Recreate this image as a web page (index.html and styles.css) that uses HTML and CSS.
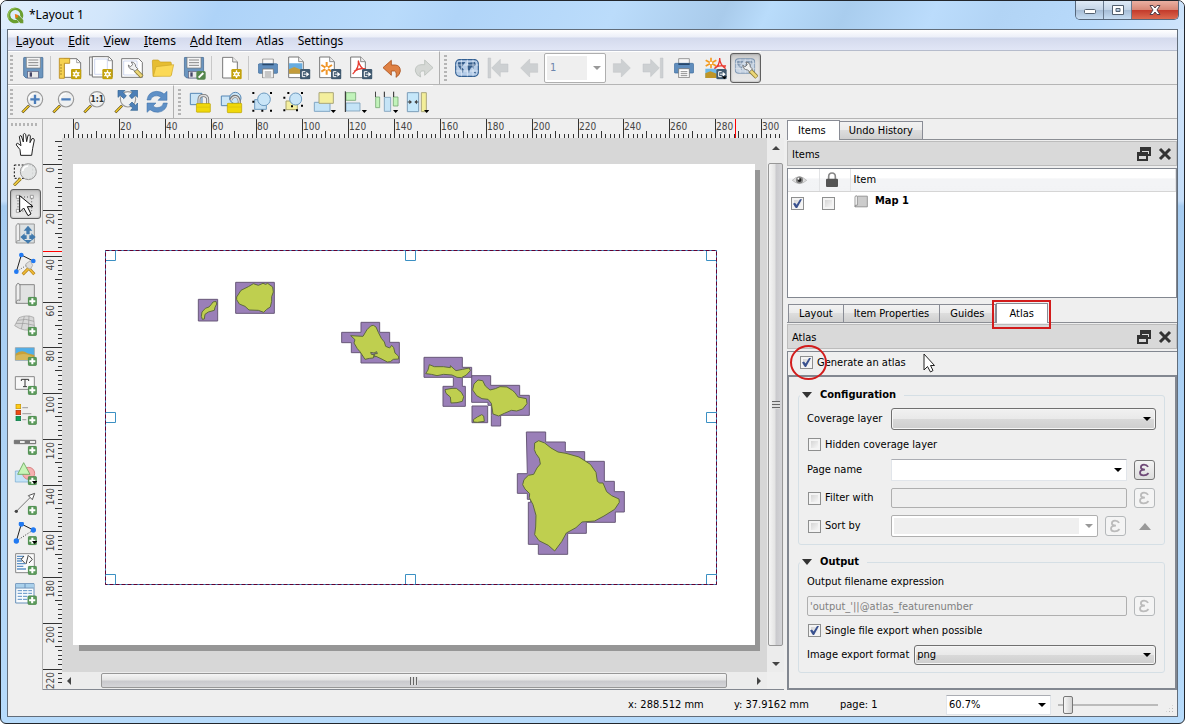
FILE: index.html
```html
<!DOCTYPE html>
<html lang="en">
<head>
<meta charset="utf-8">
<title>*Layout 1</title>
<link rel="stylesheet" href="styles.css">
</head>
<body>
<svg class="defs" aria-hidden="true">
  <symbol id="badge-new" viewBox="0 0 33 33"><rect x="1" y="1" width="31" height="31" rx="4" fill="#c3a20d"/><path d="M16.500 5V28M6.500 11 26.500 22M6.500 22 26.500 11" stroke="#fff" stroke-width="4"/><circle cx="16.500" cy="16.500" r="7.500" fill="#fff"/><circle cx="16.500" cy="16.500" r="3.500" fill="#d8bb38"/></symbol>
  <symbol id="badge-add" viewBox="0 0 28 28"><rect x="1" y="1" width="26" height="26" rx="5" fill="#5a9a5a" stroke="#3f7a41" stroke-width="1.500"/><path d="M14 5V23M5 14H23" stroke="#fff" stroke-width="6"/></symbol>
  <symbol id="badge-export" viewBox="0 0 33 33"><rect x="1" y="1" width="31" height="31" rx="4" fill="#415a70"/><path d="M17 9H8V24H17" fill="none" stroke="#fff" stroke-width="3"/><path d="M12 16.500H21" stroke="#fff" stroke-width="3"/><path d="M20 9 29 16.500 20 24Z" fill="#fff"/></symbol>
  <symbol id="sheet" viewBox="0 0 48 66"><path d="M2 2H32L46 16V64H2Z" fill="#fff" stroke="#777" stroke-width="3"/><path d="M32 2V16H46" fill="#eee" stroke="#777" stroke-width="2.500"/></symbol>
  <symbol id="floppy" viewBox="0 0 62 66"><path d="M4 2H58Q60 2 60 5V61Q60 64 57 64H9L2 57V5Q2 2 4 2Z" fill="#6b95be" stroke="#4a6f96" stroke-width="2.500"/><path d="M10 2H52V34H10Z" fill="#f4f4f4" stroke="#777" stroke-width="2"/><path d="M16 10H46M16 18H46M16 26H46" stroke="#888" stroke-width="3"/><rect x="14" y="44" width="32" height="20" fill="#e8e8e8" stroke="#557" stroke-width="2"/><rect x="20" y="47" width="7" height="13" fill="#446"/></symbol>
  <symbol id="printer" viewBox="0 0 60 60"><path d="M14 2H46V20H14Z" fill="#f7f7f7" stroke="#888" stroke-width="2.500"/><path d="M5 16H55Q59 16 59 20V42Q59 45 56 45H4Q1 45 1 42V20Q1 16 5 16Z" fill="#5f8dbd" stroke="#3d6a9a" stroke-width="2"/><path d="M13 16H47V21H13Z" fill="#28486c"/><path d="M14 32H46V59H14Z" fill="#fff" stroke="#777" stroke-width="2.500"/><path d="M20 41H40M20 47H40M20 53H40" stroke="#777" stroke-width="2.500"/></symbol>
  <symbol id="lens" viewBox="0 0 72 72"><path d="M4 67 24 47" stroke="#4d4215" stroke-width="8"/><path d="M5 66 23 48" stroke="#f0c726" stroke-width="5"/><circle cx="42" cy="28" r="23" fill="#edf0f1" fill-opacity=".85" stroke="#999" stroke-width="3.500"/><path d="M25 28A17 17 0 0 1 42 11" fill="none" stroke="#fff" stroke-width="4"/></symbol>
  <symbol id="padlock" viewBox="0 0 46 56"><path d="M10 30V17Q10 4 23 4T36 17V30" fill="none" stroke="#777" stroke-width="9"/><path d="M10 30V17Q10 4 23 4T36 17V30" fill="none" stroke="#ddd" stroke-width="4"/><rect x="2" y="28" width="42" height="26" rx="2" fill="#f0d80a" stroke="#b8a000" stroke-width="2"/><path d="M3 39H43" stroke="#d8bf10" stroke-width="2"/></symbol>
  <symbol id="world" viewBox="0 0 72 54"><rect x="2" y="2" width="68" height="50" rx="12" fill="#b6cde8" stroke="#315e91" stroke-width="3.500"/><path d="M9 10 31 9 25 19 19 24 26 31 24 42 18 33 8 19ZM38 11 60 9 63 18 56 22 56 31 51 24 46 29 42 42 37 30 36 20 41 16ZM56 39 63 38 61 44Z" fill="#355d8b"/><path d="M2 18H70M2 36H70M19 2V52M37 2V52M54 2V52" stroke="#e7f0fa" stroke-width="2"/></symbol>
  <symbol id="wrench" viewBox="0 0 54 54"><path d="M27 27 47 47" stroke="#8b7b38" stroke-width="13"/><path d="M27 27 46 46" stroke="#ecd778" stroke-width="8"/><path d="M6 12Q7 25 20 26L26 31 34 23 28 17Q28 4 15 3L19 11 12 17Z" fill="#f0f1f1" stroke="#666" stroke-width="2.500"/></symbol>
  <symbol id="menu-arrow" viewBox="0 0 16 9"><path d="M0 0H16L8 9Z"/></symbol>
  <symbol id="eps" viewBox="0 0 21 20"><path d="M14.500 6.500Q13 4 10 4Q6.500 4 6.500 7Q6.500 9.500 11 9.500Q5.500 9.500 5.500 13Q5.500 16 9.500 16Q13 16 15 13.500" fill="none" stroke="currentColor" stroke-width="2"/></symbol>
  <symbol id="float" viewBox="0 0 14 14"><path d="M3 0H14V9H11V7H12V4H5V5H3Z" fill="#333"/><path d="M0 5H11V14H0ZM2 9V12H9V9Z" fill="#333" fill-rule="evenodd"/></symbol>
  <symbol id="cross" viewBox="0 0 14 14"><path d="M2 2 12 12M12 2 2 12" stroke="#333" stroke-width="3"/></symbol>
</svg>

<div class="window">
  <header class="titlebar">
    <svg class="logo" viewBox="0 0 48 48"><path d="M24 2A22 22 0 1 0 34 43L27 36A14 14 0 1 1 37 25L44 33A22 22 0 0 0 24 2Z" fill="#6a9f2f"/><path d="M24 3A21 21 0 0 0 6 34" fill="none" stroke="#98c35c" stroke-width="3"/><path d="M24 23 33 23 46 37V46H38L24 32Z" fill="#6d9b31"/><path d="M22 20 30 22 32 29 24 31Z" fill="#ee7913"/></svg>
    <h1 class="title">*Layout 1</h1>
    <div class="wincontrols">
      <button class="winbtn" aria-label="Minimize"><svg viewBox="0 0 14 10"><rect x="1.500" y="4.500" width="11" height="4" rx="1" fill="#fff" stroke="#53606f"/></svg></button>
      <button class="winbtn" aria-label="Maximize"><svg viewBox="0 0 14 10"><path d="M1.500.5H12.500V9.500H1.500ZM5 3.500V6.500H9V3.500Z" fill="#fff" fill-rule="evenodd" stroke="#53606f"/></svg></button>
      <button class="winbtn winclose" aria-label="Close"><svg viewBox="0 0 14 10"><path d="M2 .5H5L7 3 9 .5H12L9 5 12 9.500H9L7 7 5 9.500H2L5 5Z" fill="#fff" stroke="#53404a"/></svg></button>
    </div>
  </header>

  <div class="client">
    <nav class="menubar">
      <button><u>L</u>ayout</button><button><u>E</u>dit</button><button><u>V</u>iew</button><button><u>I</u>tems</button><button><u>A</u>dd Item</button><button>Atlas</button><button>Settings</button>
    </nav>

    <div class="toolrow">
      <div class="toolbar">
        <i class="grip"></i>
        <button class="tool" aria-label="Save Project"><svg viewBox="63 168 72 72"><use href="#floppy" x="69" y="170" width="62" height="66"/></svg></button>
        <i class="sep"></i>
        <button class="tool" aria-label="New Layout"><svg viewBox="174 168 72 72"><path d="M192 176H230L242 188V232H192Z" fill="#fff" stroke="#777" stroke-width="3"/><path d="M230 176V188H242" fill="none" stroke="#777" stroke-width="2"/><path d="M178 175H209V190H193V235H178Z" fill="#f6d251" stroke="#b8891c" stroke-width="2.500"/><path d="M180 195H186M180 204H186M180 213H186M180 222H186" stroke="#876416" stroke-width="2"/><use href="#badge-new" x="212" y="206" width="33" height="33"/></svg></button>
        <button class="tool" aria-label="Duplicate Layout"><svg viewBox="267 168 72 72"><path d="M268 171H314V225H268Z" fill="#eee" stroke="#777" stroke-width="3"/><path d="M277 170H326L337 181V231H277Z" fill="#fff" stroke="#777" stroke-width="3"/><path d="M284 177H322V223H284Z" fill="none" stroke="#b9c5e8" stroke-width="2"/><path d="M325 170V182H337" fill="none" stroke="#777" stroke-width="2"/><use href="#badge-new" x="306" y="206" width="33" height="33"/></svg></button>
        <button class="tool" aria-label="Layout Manager"><svg viewBox="360 168 72 72"><path d="M365 176H416L427 187V232H365Z" fill="#fff" stroke="#777" stroke-width="3"/><path d="M371 183H411V225H371Z" fill="none" stroke="#b9c5e8" stroke-width="2"/><use href="#wrench" x="379" y="183" width="54" height="54"/></svg></button>
        <button class="tool" aria-label="Open Template"><svg viewBox="453 168 72 72"><path d="M457 183Q457 180 460 180H475L481 186H511Q514 186 514 190V224L459 229Z" fill="#e6bd31" stroke="#c79d20" stroke-width="2"/><path d="M468 200 521 194 514 226Q513 229 510 229H460Z" fill="#fbd956" stroke="#cfa72c" stroke-width="2"/></svg></button>
        <button class="tool" aria-label="Save Template"><svg viewBox="546 168 72 72"><use href="#floppy" x="551" y="170" width="62" height="66"/><rect x="589" y="213" width="28" height="26" rx="5" fill="#54864c"/><path d="M596 233 610 219" stroke="#fff" stroke-width="6"/></svg></button>
        <i class="sep"></i>
        <button class="tool" aria-label="Add Pages"><svg viewBox="660 168 72 72"><use href="#sheet" x="669" y="169" width="48" height="68"/><use href="#badge-new" x="696" y="206" width="33" height="33"/></svg></button>
        <i class="sep"></i>
        <button class="tool" aria-label="Print Layout"><svg viewBox="768 168 72 72"><use href="#printer" x="774" y="175" width="60" height="60"/></svg></button>
        <button class="tool" aria-label="Export as Image"><svg viewBox="861 168 72 72"><use href="#sheet" x="864" y="168" width="48" height="68"/><path d="M867 190H907V221H867Z" fill="#68acdf"/><path d="M867 208 883 201 907 211V221H867Z" fill="#c49c3b"/><use href="#badge-export" x="899" y="206" width="33" height="33"/></svg></button>
        <button class="tool" aria-label="Export as SVG"><svg viewBox="954 168 72 72"><use href="#sheet" x="957" y="168" width="48" height="68"/><path d="M980 186V224M964 195 996 215M964 215 996 195" stroke="#ef9426" stroke-width="6"/><circle cx="980" cy="205" r="5" fill="#fff"/><use href="#badge-export" x="992" y="206" width="33" height="33"/></svg></button>
        <button class="tool" aria-label="Export as PDF"><svg viewBox="1047 168 72 72"><use href="#sheet" x="1050" y="168" width="48" height="68"/><path d="M1075 182Q1078 201 1096 211M1075 182Q1078 204 1058 222M1062 214Q1080 202 1097 207" fill="none" stroke="#e63c31" stroke-width="4"/><use href="#badge-export" x="1085" y="206" width="33" height="33"/></svg></button>
        <button class="tool" aria-label="Undo"><svg viewBox="1140 168 72 72"><path d="M1149 203 1174 181V195H1186Q1201 196 1201 213 1200 225 1188 232 1191 216 1184 213H1174V226Z" fill="#df8144" stroke="#a9501c" stroke-width="2.500"/></svg></button>
        <button class="tool" aria-label="Redo" disabled><svg viewBox="30 168 72 72"><path d="M96 203 71 180V194H60Q42 196 43 213 45 226 59 231 54 216 61 213H71V226Z" fill="#d5d8d5" stroke="#b9bfba" stroke-width="2.500"/></svg></button>
      </div>
      <div class="toolbar">
        <i class="grip"></i>
        <button class="tool" aria-label="Preview Atlas"><svg viewBox="162 168 72 72"><use href="#world" x="162" y="177" width="72" height="54"/></svg></button>
        <button class="tool" aria-label="First Feature" disabled><svg viewBox="255 168 72 72"><path d="M261 174H269V234H261ZM272 204 298 178V192H321V216H298V230Z" fill="#cdd0d2" stroke="#bfc3c5" stroke-width="1.500"/></svg></button>
        <button class="tool" aria-label="Previous Feature" disabled><svg viewBox="348 168 72 72"><path d="M359 204 386 177V191H410V217H386V231Z" fill="#cdd0d2" stroke="#bfc3c5" stroke-width="1.500"/></svg></button>
        <span class="selectwrap off pagepick"><select aria-label="Atlas page" disabled><option>1</option></select></span>
        <button class="tool" aria-label="Next Feature" disabled><svg viewBox="630 168 72 72"><path d="M691 204 664 177V191H640V217H664V231Z" fill="#cdd0d2" stroke="#bfc3c5" stroke-width="1.500"/></svg></button>
        <button class="tool" aria-label="Last Feature" disabled><svg viewBox="723 168 72 72"><path d="M781 174H789V234H781ZM778 204 752 178V192H729V216H752V230Z" fill="#cdd0d2" stroke="#bfc3c5" stroke-width="1.500"/></svg></button>
        <button class="tool" aria-label="Print Atlas"><svg viewBox="816 168 72 72"><use href="#printer" x="822" y="174" width="60" height="60"/></svg></button>
        <button class="tool" aria-label="Export Atlas"><svg viewBox="909 168 72 72"><path d="M933 173V205M917 181 949 198M917 198 949 181" stroke="#f39a1d" stroke-width="5"/><circle cx="933" cy="189" r="4" fill="#fff"/><path d="M959 174Q959 194 977 206M959 174Q960 195 943 207M944 203Q960 194 978 198" fill="none" stroke="#e9382e" stroke-width="4"/><path d="M916 206H950V234H916Z" fill="#6eb9e8"/><path d="M916 220 931 214 950 221V234H916Z" fill="#bf9628"/><use href="#badge-export" x="948" y="206" width="33" height="33"/><use href="#menu-arrow" x="965" y="229" width="16" height="9"/></svg></button>
        <button class="tool pressed" aria-label="Atlas Settings"><svg viewBox="1002 168 72 72"><g opacity=".55"><use href="#world" x="1004" y="174" width="62" height="48"/></g><use href="#wrench" x="1022" y="183" width="56" height="56"/></svg></button>
      </div>
    </div>

    <div class="toolrow">
      <div class="toolbar">
        <i class="grip"></i>
        <button class="tool" aria-label="Zoom In"><svg viewBox="63 270 72 72"><use href="#lens" x="63" y="270" width="72" height="72"/><path d="M105 284V312M91 298H119" stroke="#4b7dba" stroke-width="7"/></svg></button>
        <button class="tool" aria-label="Zoom Out"><svg viewBox="156 270 72 72"><use href="#lens" x="156" y="270" width="72" height="72"/><path d="M184 298H212" stroke="#4b7dba" stroke-width="7"/></svg></button>
        <button class="tool" aria-label="Zoom to 100%"><svg viewBox="249 270 72 72"><use href="#lens" x="249" y="270" width="72" height="72"/><text x="292" y="307" class="icontext" text-anchor="middle">1:1</text></svg></button>
        <button class="tool" aria-label="Zoom Full"><svg viewBox="342 270 72 72"><use href="#lens" x="342" y="270" width="72" height="72"/><path d="M354 271H375L369 277 379 288 371 296 361 286 354 292ZM413 271V292L406 286 396 296 388 288 398 277 392 271ZM413 331H392L398 324 388 314 396 306 406 316 413 309Z" fill="#4c7fb7" stroke="#2e6091" stroke-width="2"/></svg></button>
        <button class="tool" aria-label="Refresh"><svg viewBox="435 270 72 72"><path d="M441 300Q444 276 469 274 484 274 492 282L501 274V301H474L483 292Q475 285 464 288 453 291 452 300Z" fill="#5f90c6" stroke="#3a6da5" stroke-width="1.500"/><path d="M502 309Q499 334 474 337 459 337 450 329L441 337V309H468L459 318Q467 326 478 322 489 319 490 309Z" fill="#5f90c6" stroke="#3a6da5" stroke-width="1.500"/></svg></button>
      </div>
      <div class="toolbar">
        <i class="grip"></i>
        <button class="tool" aria-label="Lock Items"><svg viewBox="567 270 72 72"><path d="M571 280H606V314H571Z" fill="#cbe5f6" stroke="#5687b5" stroke-width="3"/><use href="#padlock" x="587" y="282" width="46" height="57"/></svg></button>
        <button class="tool" aria-label="Unlock Items"><svg viewBox="660 270 72 72"><path d="M664 288H697V317H664Z" fill="#cbe5f6" stroke="#5687b5" stroke-width="3"/><circle cx="706" cy="294" r="17" fill="#cbe5f6" stroke="#5687b5" stroke-width="3"/><path d="M692 300Q697 286 709 289 719 293 718 312" fill="none" stroke="#777" stroke-width="9"/><path d="M693 300Q698 288 708 290 718 294 718 312" fill="none" stroke="#ddd" stroke-width="4"/><rect x="682" y="310" width="43" height="28" rx="2" fill="#f0d80a" stroke="#b8a000" stroke-width="2"/><path d="M683 321H724" stroke="#d8bf10" stroke-width="2"/></svg></button>
        <button class="tool" aria-label="Group"><svg viewBox="753 270 72 72"><path d="M764 299H799V328H764Z" fill="#c5e1f4" stroke="#6c9abf" stroke-width="3"/><circle cx="792" cy="298" r="19" fill="#c9e5f7" stroke="#6c9abf" stroke-width="3"/><path d="M757 276h6v6h-6ZM810 276h6v6h-6ZM757 329h6v6h-6ZM810 329h6v6h-6ZM784 329h6v6h-6ZM757 302h6v6h-6Z"/></svg></button>
        <button class="tool" aria-label="Ungroup"><svg viewBox="846 270 72 72"><path d="M858 303H892V329H858Z" fill="#f4efa0" stroke="#aaa46a" stroke-width="3"/><circle cx="887" cy="297" r="18" fill="#c9e5f7" stroke="#6c9abf" stroke-width="3"/><path d="M862 276h6v6h-6ZM903 276h6v6h-6ZM850 290h6v6h-6ZM850 328h6v6h-6ZM903 314h6v6h-6ZM888 328h6v6h-6ZM873 316h6v6h-6Z"/></svg></button>
        <button class="tool" aria-label="Raise Items"><svg viewBox="939 270 72 72"><path d="M943 307H990V334H943Z" fill="#c5e4f7" stroke="#80a6c5" stroke-width="3"/><path d="M957 278H1000V310H957Z" fill="#f4ef9d" stroke="#aaa77a" stroke-width="3"/><use href="#menu-arrow" x="992" y="330" width="16" height="9"/></svg></button>
        <button class="tool" aria-label="Align Items"><svg viewBox="1032 270 72 72"><path d="M1038 278H1067V301H1038Z" fill="#c1f3ba" stroke="#78aa76" stroke-width="2.500"/><path d="M1038 309H1080V333H1038Z" fill="#c5e4f7" stroke="#7b9db8" stroke-width="2.500"/><path d="M1036 274V336" stroke="#222" stroke-width="3"/><use href="#menu-arrow" x="1085" y="330" width="16" height="9"/></svg></button>
        <button class="tool" aria-label="Distribute Items"><svg viewBox="1125 270 72 72"><path d="M1127 291H1139V323H1127Z" fill="#c1f3ba" stroke="#78aa76" stroke-width="2.500"/><path d="M1153 292H1172V334H1153Z" fill="#c5e4f7" stroke="#7b9db8" stroke-width="2.500"/><path d="M1180 291H1194V318H1180Z" fill="#c1f3ba" stroke="#78aa76" stroke-width="2.500"/><path d="M1126 275V291M1153 275V291M1181 275V291" stroke="#222" stroke-width="3"/><use href="#menu-arrow" x="1179" y="330" width="16" height="9"/></svg></button>
        <button class="tool" aria-label="Resize Items"><svg viewBox="18 270 72 72"><path d="M22 278H56V335H22Z" fill="#c5e7fa" stroke="#7b9db8" stroke-width="3"/><path d="M64 278H79V335H64Z" fill="#f3ee99" stroke="#aaa77a" stroke-width="3"/><path d="M23 306H30M55 306H48" stroke="#333" stroke-width="3"/><path d="M28 299V313L36 306ZM51 299V313L43 306Z" fill="#444"/><use href="#menu-arrow" x="72" y="330" width="16" height="9"/></svg></button>
      </div>
    </div>

    <main class="workspace">
      <div class="toolbox">
        <i class="grip flat"></i>
        <button class="tool" aria-label="Pan"><svg viewBox="39 48 72 72"><path d="M62 118 60 101 49 87Q48 82 53 82L63 89 58 62Q59 57 64 60L70 78 70 55Q74 50 77 55L80 77 84 58Q89 54 91 60L90 80 96 68Q102 65 103 72L98 97 95 118Z" fill="#fff" stroke="#222" stroke-width="3"/></svg></button>
        <button class="tool" aria-label="Zoom"><svg viewBox="39 138 72 72"><path d="M43 147H98V187H43Z" fill="none" stroke="#111" stroke-width="3" stroke-dasharray="6 5"/><path d="M42 208 62 188" stroke="#806b18" stroke-width="9"/><path d="M43 207 62 188" stroke="#f4cf46" stroke-width="5"/><circle cx="85" cy="167" r="24" fill="#e1e3e3" fill-opacity=".93" stroke="#999" stroke-width="3"/><path d="M68 165Q70 151 84 150" fill="none" stroke="#fff" stroke-width="5"/></svg></button>
        <button class="tool pressed" aria-label="Select/Move Item"><svg viewBox="39 231 72 72"><path d="M54 246H95V288H54Z" fill="none" stroke="#555" stroke-width="3" stroke-dasharray="3 6"/><path d="M49 241h9v9h-9ZM91 241h9v9h-9ZM49 283h9v9h-9Z" fill="#fff" stroke="#777" stroke-width="2"/><path d="M59 242V291L71 279 84 302 93 297 82 275H99Z" fill="#fff" stroke="#111" stroke-width="3"/></svg></button>
        <button class="tool" aria-label="Move Item Content"><svg viewBox="39 321 72 72"><path d="M48 333V384H103V327H55M48 333Q53 321 59 329V377Q48 375 50 384" fill="#dce1e3" stroke="#999" stroke-width="3"/><path d="M84 332 97 347H89V358H79V347H71ZM61 366 74 355V361H80V372H74V378ZM107 366 94 355V361H88V372H94V378ZM84 386 72 375H96Z" fill="#427aad"/></svg></button>
        <button class="tool" aria-label="Edit Nodes"><svg viewBox="39 411 72 72"><path d="M49 470 64 420 100 438" fill="none" stroke="#222" stroke-width="3"/><path d="M49 470 100 438" stroke="#555" stroke-width="3" stroke-dasharray="3 5"/><path d="M68 478 88 458M83 456 103 478" stroke="#b38118" stroke-width="9"/><path d="M69 477 88 458M83 456 102 477" stroke="#f1bd38" stroke-width="5"/><path d="M77 447 91 437 98 451 91 463 80 457Z" fill="#ddd" stroke="#999" stroke-width="2"/><circle cx="49" cy="470" r="7" fill="#227af2"/><circle cx="64" cy="420" r="7" fill="#227af2"/><circle cx="100" cy="438" r="7" fill="#227af2"/></svg></button>
        <button class="tool" aria-label="Add Map"><svg viewBox="39 501 72 72"><path d="M48 513V565H103V509H57M48 513Q53 499 60 509V556Q48 552 49 565" fill="#e1e2e2" stroke="#888" stroke-width="3"/><use href="#badge-add" x="83" y="545" width="28" height="28"/></svg></button>
        <button class="tool" aria-label="Add 3D Map"><svg viewBox="39 591 72 72"><path d="M57 608Q80 598 101 607L104 643Q72 652 44 632Z" fill="#d8d8d8" stroke="#999" stroke-width="2"/><path d="M73 604 64 642M87 602 85 645M52 616Q78 609 102 619M48 625Q78 623 103 631" fill="none" stroke="#999" stroke-width="2"/><use href="#badge-add" x="83" y="635" width="28" height="28"/></svg></button>
        <button class="tool" aria-label="Add Picture"><svg viewBox="39 681 72 72"><path d="M46 698H103V736H46Z" fill="#51afe9" stroke="#999" stroke-width="2"/><path d="M47 716Q67 702 82 715L103 720V735H47Z" fill="#c7a039"/><path d="M47 722Q77 710 103 728V735H47Z" fill="#d6b758"/><use href="#badge-add" x="83" y="725" width="28" height="28"/></svg></button>
        <button class="tool" aria-label="Add Label"><svg viewBox="39 24 72 72"><path d="M46 38H103V76H46Z" fill="#f8f8f8" stroke="#888" stroke-width="3"/><path d="M64 51V46H86V51M75 46V68M69 68H81" fill="none" stroke="#333" stroke-width="3"/><use href="#badge-add" x="83" y="65" width="28" height="28"/></svg></button>
        <button class="tool" aria-label="Add Legend"><svg viewBox="39 114 72 72"><rect x="48" y="121" width="14" height="13" fill="#ffcb16" stroke="#c49400" stroke-width="2"/><rect x="48" y="139" width="14" height="13" fill="#ef4b13" stroke="#a8320b" stroke-width="2"/><rect x="48" y="157" width="14" height="13" fill="#10a45c" stroke="#067340" stroke-width="2"/><path d="M67 131H84M67 149H94M67 167H79" stroke="#aaa" stroke-width="4"/><use href="#badge-add" x="83" y="155" width="28" height="28"/></svg></button>
        <button class="tool" aria-label="Add Scale Bar"><svg viewBox="39 204 72 72"><path d="M43 229H107V239H43Z" fill="#eee" stroke="#666" stroke-width="3"/><path d="M44 234H60M74 234H90" stroke="#777" stroke-width="8"/><use href="#badge-add" x="83" y="245" width="28" height="28"/></svg></button>
        <button class="tool" aria-label="Add Shape"><svg viewBox="39 294 72 72"><path d="M46 321H90V354H46Z" fill="#c5e4f7" stroke="#72a8d0" stroke-width="2"/><circle cx="86" cy="328" r="18" fill="#f6b0b0" stroke="#d98585" stroke-width="3"/><path d="M71 296 90 331H53Z" fill="#c8f5b8" stroke="#68a55c" stroke-width="2.500"/><use href="#badge-add" x="83" y="336" width="28" height="28"/><use href="#menu-arrow" x="96" y="351" width="16" height="9"/></svg></button>
        <button class="tool" aria-label="Add Arrow"><svg viewBox="39 384 72 72"><path d="M50 441 91 400" stroke="#777" stroke-width="3"/><path d="M104 388 85 395 97 407Z" fill="#fff" stroke="#555" stroke-width="3"/><circle cx="49" cy="442" r="5" fill="#444"/><use href="#badge-add" x="83" y="425" width="28" height="28"/></svg></button>
        <button class="tool" aria-label="Add Node Item"><svg viewBox="39 474 72 72"><path d="M49 531 64 480 100 498" fill="none" stroke="#222" stroke-width="3"/><path d="M49 531 100 498" stroke="#333" stroke-width="3" stroke-dasharray="3 5"/><circle cx="49" cy="531" r="8" fill="#227af2"/><circle cx="64" cy="480" r="8" fill="#227af2"/><circle cx="100" cy="498" r="8" fill="#227af2"/><use href="#badge-add" x="83" y="516" width="28" height="28"/><use href="#menu-arrow" x="96" y="531" width="16" height="9"/></svg></button>
        <button class="tool" aria-label="Add HTML"><svg viewBox="39 564 72 72"><path d="M47 569H103V626H47Z" fill="#fbfbfb" stroke="#888" stroke-width="3"/><path d="M51 577H72M51 584H66M51 591H66M51 599H77M51 607H70M51 615H78" stroke="#5e91c5" stroke-width="4"/><path d="M72 576 64 586 74 597M85 573 78 600M88 576 97 586 87 597" fill="none" stroke="#444" stroke-width="3"/><use href="#badge-add" x="83" y="605" width="28" height="28"/></svg></button>
        <button class="tool" aria-label="Add Attribute Table"><svg viewBox="39 654 72 72"><path d="M47 659H102V717H47Z" fill="#f8fbfd" stroke="#6991ba" stroke-width="3"/><path d="M48 660H101V671H48Z" fill="#a9d0eb"/><path d="M48 672H101M75 660V672" stroke="#6991ba" stroke-width="3"/><path d="M53 680H96M53 688H96M53 697H96M53 706H96" stroke="#5e91c5" stroke-width="3" stroke-dasharray="13 3"/><use href="#badge-add" x="82" y="694" width="29" height="29"/></svg></button>
      </div>

      <section class="view">
        <svg class="ruler ruler-h" id="ruler-h"></svg>
        <svg class="ruler ruler-v" id="ruler-v"></svg>
        <div class="canvas">
          <div class="paper">
            <svg class="mapitem" viewBox="105 250 612 335">
              <g class="boxes" transform="translate(180 260) scale(.33333)">
                <path d="M55 118H113V183H55ZM167 67H283V160H167ZM543 187H599V217H629V247H658V309H543V278H514V248H485V217H543Z"/>
              </g>
              <g class="land" transform="translate(180 260) scale(.33333)">
                <path d="M99 126 108 124 110 132 105 142 103 151 96 153 85 156 75 163 73 177 67 178 64 169 66 156 76 145 87 141 94 133Z"/>
                <path d="M170 111 183 91 205 80 220 71 235 76 249 70 257 73 263 70 278 81 280 96 275 110 275 124 271 141 260 148 251 157 235 151 207 150 195 139 178 132 170 119Z"/>
                <path d="M512 227 549 229 561 209 572 198 580 196 588 201 595 217 604 235 613 246 617 259 629 264 635 256 641 263 645 279 655 288 656 297 640 298 631 305 622 306 603 296 588 289 584 291 584 281 592 281 590 275 582 279 572 277 574 283 582 284 580 294 569 295 555 298 540 275 532 266 522 249 525 239Z"/>
              </g>
              <g class="boxes" transform="translate(410 340) scale(.33333)">
                <path d="M42 52H157V82H185V112H157V139H166V199H99V139H130V112H42ZM185 107H242V136H329V166H358V226H272V258H244V226V196H234V187H185ZM186 198H233V248H186Z"/>
                <path d="M349 276H407V306H466V335H524V364H583V424H613V455H643V516H616V547H529V580H473V643H385V613H355V487H362V478H352V460H322V401H352Z"/>
              </g>
              <g class="land" transform="translate(410 340) scale(.33333)">
                <path d="M47 101 54 90 58 74 73 80 100 80 121 83 121 77 138 92 158 88 178 84 181 92 169 105 154 113 141 112 126 105 101 103 81 107 64 103Z"/>
                <path d="M105 149 126 145 139 145 154 157 161 170 157 184 141 188 123 189 121 171 108 160Z"/>
                <path d="M188 150 192 132 204 120 218 122 226 138 240 150 256 146 270 140 291 141 307 151 315 158 324 171 349 176 351 191 338 207 320 213 304 211 283 220 266 228 249 222 244 190 234 178 216 176 200 167Z"/>
                <path d="M190 239 202 231 215 224 221 228 223 244 202 247 191 246Z"/>
                <path d="M374 309 386 302 404 309 423 324 444 336 468 340 507 351 541 373 558 397 562 424 569 429 579 429 590 455 605 467 627 477 628 487 614 508 582 528 554 543 516 546 498 563 469 579 455 605 434 633 415 616 387 602 374 584 377 561 378 526 369 494 358 473 359 461 345 447 338 434 342 419 355 406 371 403 381 384 391 372 388 355 378 341 373 329Z"/>
              </g>
              <path class="handles" d="M105.500 250.500h10v10h-10ZM405.500 250.500h10v10h-10ZM706.500 250.500h10v10h-10ZM105.500 412.500h10v10h-10ZM706.500 412.500h10v10h-10ZM105.500 574.500h10v10h-10ZM405.500 574.500h10v10h-10ZM706.500 574.500h10v10h-10Z"/>
              <path class="frame" d="M105.500 250.500H716.500V584.500H105.500Z"/>
              <path class="frame dash" d="M105.500 250.500H716.500V584.500H105.500Z"/>
            </svg>
          </div>
        </div>
        <div class="vscroll"><i class="arr up"></i><div class="thumb"></div><i class="arr down"></i></div>
        <div class="hscroll"><i class="arr left"></i><div class="thumb"></div><i class="arr right"></i></div>
      </section>

      <aside class="dock">
        <div class="tabs"><button class="tab active">Items</button><button class="tab">Undo History</button></div>
        <div class="panelhead"><span>Items</span><button aria-label="Float Items"><svg viewBox="0 0 14 14"><use href="#float"/></svg></button><button aria-label="Close Items"><svg viewBox="0 0 14 14"><use href="#cross"/></svg></button></div>
        <div class="tree">
          <table>
            <thead><tr>
              <th class="c-ico"><svg class="eye" viewBox="0 0 46 34"><path d="M1 18Q22-4 45 18Q23 38 1 18Z" fill="#ddd" stroke="#aaa" stroke-width="2"/><circle cx="23" cy="17" r="11" fill="#888"/><circle cx="23" cy="17" r="6" fill="#222"/><circle cx="20" cy="13" r="3" fill="#fff"/></svg></th>
              <th class="c-ico"><svg class="lock" viewBox="0 0 36 45"><path d="M8 22V14Q8 3 18 3T28 14V22" fill="none" stroke="#888" stroke-width="5"/><rect y="20" width="36" height="25" rx="3" fill="#555"/></svg></th>
              <th>Item</th></tr></thead>
            <tbody><tr>
              <td><input type="checkbox" aria-label="Visible" checked></td>
              <td><input type="checkbox" aria-label="Locked"></td>
              <td class="name"><svg viewBox="0 0 42 38"><path d="M3 4V35H40V3H10M3 4Q7-1 10 4V30Q2 28 3 35" fill="#ccc" stroke="#888" stroke-width="2.500"/></svg>Map 1</td></tr></tbody>
          </table>
        </div>

        <div class="tabs lower"><button class="tab">Layout</button><button class="tab">Item Properties</button><button class="tab">Guides</button><button class="tab active marked">Atlas</button></div>
        <div class="panelhead"><span>Atlas</span><button aria-label="Float Atlas"><svg viewBox="0 0 14 14"><use href="#float"/></svg></button><button aria-label="Close Atlas"><svg viewBox="0 0 14 14"><use href="#cross"/></svg></button></div>
        <form class="atlas">
          <div class="generate"><label class="check"><span class="ring"><input type="checkbox" checked></span>Generate an atlas</label></div>
          <svg class="pointer" viewBox="0 0 12 20"><path d="M1 1V17L4.500 13.500 7.500 19 10 17.500 7.500 12.500H11.500Z" fill="#fff" stroke="#222"/></svg>
          <div class="settings">
            <fieldset>
              <legend><i class="fold"></i>Configuration</legend>
              <div class="row r22"><label class="lab" for="cov">Coverage layer</label><span class="selectwrap raised"><select id="cov"><option></option></select></span></div>
              <div class="row r15"><label class="check"><input type="checkbox">Hidden coverage layer</label></div>
              <div class="row r22"><label class="lab" for="pname">Page name</label><span class="selectwrap"><select id="pname"><option></option></select></span><button type="button" class="expr" aria-label="Page name expression"><svg viewBox="0 0 21 20"><use href="#eps"/></svg></button></div>
              <div class="row r20"><label class="lab check"><input type="checkbox">Filter with</label><input class="text" type="text" aria-label="Filter expression" disabled><button type="button" class="expr" aria-label="Edit filter" disabled><svg viewBox="0 0 21 20"><use href="#eps"/></svg></button></div>
              <div class="row r22"><label class="lab check"><input type="checkbox">Sort by</label><span class="selectwrap off"><select aria-label="Sort field" disabled><option></option></select></span><button type="button" class="expr" aria-label="Edit sort expression" disabled><svg viewBox="0 0 21 20"><use href="#eps"/></svg></button><button type="button" class="dir" aria-label="Sort direction" disabled><i class="uptri"></i></button></div>
            </fieldset>
            <fieldset class="output">
              <legend><i class="fold"></i>Output</legend>
              <label class="row r14" for="fname">Output filename expression</label>
              <div class="row r20"><input class="text" id="fname" type="text" value="'output_'||@atlas_featurenumber" disabled><button type="button" class="expr" aria-label="Edit filename expression" disabled><svg viewBox="0 0 21 20"><use href="#eps"/></svg></button></div>
              <div class="row r15"><label class="check"><input type="checkbox" checked>Single file export when possible</label></div>
              <div class="row r20"><label class="fmt" for="fmt">Image export format</label><span class="selectwrap raised"><select id="fmt"><option>png</option></select></span></div>
            </fieldset>
          </div>
        </form>
      </aside>
    </main>

    <footer class="status">
      <span class="cell">x: 288.512 mm</span><span class="cell">y: 37.9162 mm</span><span class="cell pg">page: 1</span>
      <span class="selectwrap zoompick"><select aria-label="Zoom level"><option>60.7%</option></select></span>
      <input class="slider" type="range" aria-label="Zoom" min="0" max="100" value="5">
      <i class="sizegrip"></i>
    </footer>
  </div>
</div>
<script src="ruler.js"></script>
</body>
</html>
```
FILE: ruler.js
```js
(function () {
  var NS = "http://www.w3.org/2000/svg";
  var SCALE = 2.2935;

  function add(svg, name, attrs, text) {
    var el = document.createElementNS(NS, name);
    Object.keys(attrs).forEach(function (k) { el.setAttribute(k, attrs[k]); });
    if (text !== undefined) el.textContent = text;
    svg.appendChild(el);
  }

  function build(svg, vertical, origin, from, to, marker) {
    for (var mm = from; mm <= to; mm += 2) {
      var pos = Math.round(origin + mm * SCALE);
      var len = mm % 20 === 0 ? 19 : mm % 10 === 0 ? 7 : 4;
      add(svg, "rect", vertical
        ? { x: 19 - len, y: pos, width: len, height: 1, "class": "tick" }
        : { x: pos, y: 19 - len, width: 1, height: len, "class": "tick" });
      if (len === 19) {
        if (vertical) {
          add(svg, "text", { transform: "translate(11 " + (pos + 3) + ") rotate(-90)", "text-anchor": "end" }, mm);
        } else {
          add(svg, "text", { x: pos + 1, y: 11 }, mm);
        }
      }
    }
    add(svg, "rect", vertical
      ? { x: 0, y: marker, width: 19, height: 1, "class": "cursor-mark" }
      : { x: marker, y: 0, width: 1, height: 19, "class": "cursor-mark" });
  }

  build(document.getElementById("ruler-h"), false, 11, -4, 308, 673);
  build(document.getElementById("ruler-v"), true, 26, -10, 226, 113);
})();
```
FILE: styles.css
```css
* { box-sizing: border-box; }
html, body { height: 100%; }
body {
  margin: 0;
  background: #fff;
  color: #000;
  font: 11px/14px "DejaVu Sans Condensed", "DejaVu Sans", sans-serif;
}
button, input, select { font: inherit; color: inherit; margin: 0; padding: 0; }
button { border: 0; background: none; }
.defs { position: absolute; width: 0; height: 0; }

.window {
  display: flex;
  flex-direction: column;
  height: 100vh;
  border: 1px solid #22262c;
  border-radius: 7px 7px 6px 6px;
  background: linear-gradient(#d7e8fb 0, #c4ddf8 200px, #a5cbf0 205px, #b7dbfb 100%);
  padding: 0 6px 6px;
  overflow: hidden;
}
.titlebar {
  display: flex;
  align-items: center;
  flex: 0 0 28px;
  margin: 0 -6px;
  padding-left: 6px;
  background: linear-gradient(115deg, #e0eefc 0, #d2e6fb 100px, #aed3f8 200px, #b9dbfb 360px, #b0d4f8 420px, #bbdcfb 560px, #a9cbeb 660px, #b9dcfb 700px, #a9cdee 770px, #bbdcfc 850px, #b2d4f5 910px, #b8dafb 1000px, #cfe4fb 100%);
}
.logo { width: 17px; height: 17px; }
.title { flex: 1; margin: 0 0 0 5px; font: 12px/16px "Noto Sans", sans-serif; }
.wincontrols { display: flex; align-self: flex-start; margin-right: 5px; border: 1px solid #56677b; border-top: 0; border-radius: 0 0 5px 5px; overflow: hidden; }
.winbtn { display: flex; align-items: center; justify-content: center; width: 28px; height: 18px; border-right: 1px solid #68798d; background: linear-gradient(#dfeaf6, #c3d4e6 50%, #a5bcd5 50%, #c6dcf2); }
.winbtn svg { width: 14px; height: 10px; }
.winclose { width: 46px; border: 0; background: linear-gradient(#eab0a2, #d88775 50%, #c2392a 50%, #dc6a50); }

.client { display: flex; flex-direction: column; flex: 1; min-height: 0; border: 1px solid #626d7a; background: #efefef; }
.menubar { display: flex; flex: 0 0 21px; padding-left: 1px; border-bottom: 1px solid #b6bccc; background: linear-gradient(#fff, #eceff8 7px, #d4daed 8px, #e1e6f6); }
.menubar button { padding: 2px 7px 0; font: 12px/18px "Noto Sans", sans-serif; }

.toolrow { display: flex; flex: 0 0 34px; border-bottom: 1px solid #b5b5b5; }
.toolbar { display: flex; align-items: center; border-top: 1px solid #fff; padding-left: 3px; }
.toolbar:first-child { padding: 0 1px; border-right: 1px solid #b0b0b0; }
.grip { width: 3px; height: 27px; margin-right: 4px; background: repeating-linear-gradient(#b5b5b5 0 2px, transparent 2px 4px); }
.toolbar > .grip { flex: none; margin-left: 1px; }
.grip.flat { width: 28px; height: 3px; margin: 4px 0 3px; background: repeating-linear-gradient(90deg, #b5b5b5 0 2px, transparent 2px 4px); }
.sep { width: 1px; height: 24px; margin: 0 3px 0 2px; background: #c8c8c8; }
.tool { display: flex; align-items: center; justify-content: center; flex: none; width: 31px; height: 30px; border: 1px solid transparent; border-radius: 3px; }
.tool svg { flex: none; width: 24px; height: 24px; }
.tool.pressed { border-color: #5f5f5f; background: linear-gradient(#c4c4c4, #dedede 30%, #e8e8e8); box-shadow: inset 0 0 2px #888; }
.icontext { font: bold 25px "DejaVu Sans Condensed", sans-serif; fill: #333; }

.selectwrap { position: relative; display: flex; flex: 1; height: 100%; border: 1px solid #e1e5ea; border-top-color: #abadb3; background: #fff; }
.selectwrap select { flex: 1; min-width: 0; width: 100%; border: 0; padding: 0 18px 0 2px; appearance: none; background: none; opacity: 1; }
.selectwrap::after { content: ""; position: absolute; right: 4px; top: 50%; margin-top: -2px; border: 4px solid transparent; border-top-color: #000; border-bottom: 0; }
.selectwrap.raised { border: 1px solid #707070; border-radius: 3px; background: linear-gradient(#f1f1f1, #e9e9e9 48%, #d9d9d9 50%, #cecece); box-shadow: inset 0 0 0 1px #f6f6f6; }
.selectwrap.off { border: 1px solid #afafaf; border-radius: 2px; padding: 2px 18px 2px 2px; }
.selectwrap.off select { padding: 0 3px; background: #efefef; color: #6d86ad; }
.selectwrap.off::after { border-top-color: #999; }
.selectwrap.pagepick { flex: 0 0 62px; height: 30px; }

.workspace { display: flex; flex: 1; min-height: 0; }
.toolbox { display: flex; flex-direction: column; align-items: center; flex: 0 0 35px; border-right: 1px solid #b5b5b5; }

.view { display: grid; flex: 1; min-width: 0; grid-template: 19px 1fr 17px / 19px 1fr 17px; margin-right: 3px; border-bottom: 1px solid #828790; }
.ruler { display: block; overflow: hidden; width: 100%; height: 100%; }
.ruler text { font-size: 10px; fill: #444; }
.tick { fill: #333; }
.cursor-mark { fill: #f00; }
.ruler-h { grid-area: 1 / 2 / 2 / 4; }
.ruler-v { grid-area: 2 / 1 / 4 / 2; min-height: 0; }
.canvas { grid-area: 2 / 2; position: relative; min-width: 0; min-height: 0; overflow: hidden; background: #d7d7d7; padding: 26px 12px 27px 11px; }
.paper { height: 100%; position: relative; background: #fff; box-shadow: 5px 6px 0 0 #969696; clip-path: polygon(0 0, 100% 0, 100% 6px, calc(100% + 5px) 6px, calc(100% + 5px) calc(100% + 6px), 6px calc(100% + 6px), 6px 100%, 0 100%); }
.mapitem { position: absolute; left: 32px; top: 86px; width: 612px; height: 335px; }
.boxes path { fill: #9a7fb8; stroke: #685878; stroke-width: 3; }
.land path { fill: #bfcf4f; stroke: #5e6a3d; stroke-width: 3; stroke-linejoin: round; }
.frame { fill: none; stroke: #3b90c3; }
.frame.dash { stroke: #640032; stroke-dasharray: 4 2; }
.handles { fill: #fff; stroke: #3b90c3; }

.vscroll { grid-area: 2 / 3; display: flex; flex-direction: column; align-items: center; background: #ececec; min-height: 0; }
.hscroll { grid-area: 3 / 2; display: flex; align-items: center; background: #ececec; }
.thumb { flex: 1; display: flex; align-items: center; justify-content: center; border: 1px solid #979797; border-radius: 2px; }
.vscroll .thumb { width: 15px; margin: 13px 0 11px; background: linear-gradient(90deg, #f5f5f5, #e4e4e4 45%, #c9c9cd 55%, #d5d5d8); }
.hscroll .thumb { height: 15px; margin: 0 30px 0 26px; background: linear-gradient(#f5f5f5, #e4e4e4 45%, #c9c9cd 55%, #d5d5d8); }
.thumb::after { content: ""; width: 8px; height: 8px; background: repeating-linear-gradient(90deg, #666 0 1px, #ddd 1px 3px); }
.vscroll .thumb::after { background: repeating-linear-gradient(#666 0 1px, #ddd 1px 3px); }
.arr { border: 4px solid transparent; }
.up { border-bottom-color: #444; border-top: 0; margin-top: 8px; }
.down { border-top-color: #444; border-bottom: 0; margin: 5px 0 6px; }
.left { border-right-color: #444; border-left: 0; margin-left: 5px; margin-right: 4px; }
.right { border-left-color: #444; border-right: 0; margin-right: 6px; }

.dock { display: flex; flex-direction: column; flex: 0 0 390px; }
.tabs { display: flex; align-items: flex-end; flex: 0 0 21px; border-bottom: 1px solid #8b8e94; }
.tab { height: 18px; padding: 0 9px; border: 1px solid #898c95; border-bottom: 0; border-left: 0; background: linear-gradient(#f2f2f2, #ebebeb 48%, #dddddd 50%, #cfcfcf); line-height: 17px; white-space: nowrap; }
.tab.active { height: 20px; padding: 0 13px 0 10px; margin-bottom: -1px; border-left: 1px solid #898c95; background: #fff; position: relative; }
.lower { margin-top: 4px; padding-left: 1px; }
.lower .tab:first-child { border-left: 1px solid #898c95; }
.lower .tab { padding: 0 10px; }
.lower .tab.active { padding: 0 13px; }
.marked::after { content: ""; position: absolute; left: -5px; right: -4px; top: -4px; bottom: -6px; border: 2px solid #d21c1c; }
.panelhead { display: flex; align-items: center; flex: 0 0 25px; gap: 7px; margin: 1px 0 2px; padding: 0 4px; border: 1px solid #bcbcbc; background: #d9d9d9; }
.panelhead span { flex: 1; padding-top: 2px; }
.panelhead button, .panelhead svg { display: block; width: 14px; height: 14px; }

.tree { flex: 0 0 130px; border: 1px solid #828790; background: #fff; }
table { width: 100%; border-collapse: collapse; table-layout: fixed; }
th { height: 22px; padding: 0 3px; text-align: left; font-weight: normal; border-right: 1px solid #e2e3e5; border-bottom: 1px solid #d5d5d5; background: linear-gradient(#fff 40%, #f3f4f6 45%, #f2f3f5); }
.c-ico { width: 31px; padding-left: 4px; }
td { padding: 5px 2px 0 3px; height: 20px; }
.eye { display: block; width: 15px; height: 12px; }
.lock { display: block; width: 12px; height: 15px; margin-left: 2px; }
td.name { padding: 0 4px; font-weight: bold; }
.name svg { width: 14px; height: 13px; margin-right: 7px; vertical-align: -4px; }

input[type="checkbox"] { appearance: none; display: block; flex: none; position: relative; width: 13px; height: 13px; border: 1px solid #8e8f8f; background: linear-gradient(135deg, #ccc, #fff); box-shadow: inset 0 0 0 2px #f4f4f4; }
input[type="checkbox"]:checked::after { content: ""; position: absolute; inset: 1px; background: #39518f; clip-path: polygon(0 50%, 22% 40%, 40% 62%, 78% 0, 100% 0, 45% 100%, 32% 100%); }
.check { display: flex; align-items: center; gap: 4px; white-space: nowrap; }
.row .check, .row.check { padding-left: 1px; }

.atlas { position: relative; display: flex; flex: 1; min-height: 0; flex-direction: column; margin: 0; border-top: 1px solid #828790; border-left: 1px solid #828790; }
.generate { flex: 0 0 23px; display: flex; align-items: center; padding: 0 0 2px 12px; }
.ring { position: relative; }
.ring::after { content: ""; position: absolute; left: -10px; top: -11px; width: 33px; height: 31px; border: 2px solid #d21c1c; border-radius: 50%; }
.pointer { position: absolute; left: 135px; top: 1px; width: 12px; height: 20px; }
.settings { flex: 1; display: flex; flex-direction: column; gap: 9px; border: 2px solid #828790; border-left-width: 1px; padding: 10px 10px 0 9px; }
fieldset { display: flex; flex-direction: column; gap: 7px; min-width: 0; margin: 0; padding: 5px 8px 7px; border: 1px solid #d5dfe5; border-radius: 3px; }
legend { display: flex; align-items: center; gap: 8px; height: 16px; margin-left: -7px; padding: 0 8px 0 2px; font-weight: bold; }
.fold { border: 5px solid transparent; border-top: 6px solid #333; border-bottom: 0; }
.row { display: flex; align-items: center; }
.r14 { height: 14px; } .r15 { height: 15px; } .r20 { height: 20px; } .r22 { height: 22px; }
.lab { flex: 0 0 84px; white-space: nowrap; }
.fmt { margin-right: 5px; }
.text { flex: 1; min-width: 0; height: 20px; border: 1px solid #afafaf; border-radius: 2px; padding: 0 2px; background: #efefef; color: #808080; }
.expr { flex: none; width: 21px; height: 20px; margin: 0 1px 0 7px; border: 1px solid #777; border-radius: 3px; color: #6f4a78; background: linear-gradient(#f4f4f4, #ddd); }
.expr svg { display: block; width: 19px; height: 18px; }
.expr:disabled { border-color: #b5b8ba; color: #bbb; background: #f4f4f4; }
.dir { width: 21px; margin: 0 1px 0 7px; display: flex; justify-content: center; }
.uptri { border: 6px solid transparent; border-bottom: 7px solid #999; border-top: 0; }

.status { display: flex; align-items: center; justify-content: flex-end; flex: 0 0 26px; padding-top: 3px; }
.cell { width: 106px; white-space: nowrap; }
.status .zoompick { flex: 0 0 105px; height: 20px; }
.slider { appearance: none; width: 100px; height: 20px; margin: 0 4px 0 7px; background: linear-gradient(#bbb, #bbb) center / 100% 2px no-repeat; }
.slider::-webkit-slider-thumb { appearance: none; width: 10px; height: 18px; border: 1px solid #777; border-radius: 2px; background: linear-gradient(90deg, #f6f6f6, #d2d2d2); }
.sizegrip { align-self: flex-end; width: 9px; height: 9px; margin: 0 3px 3px; background: radial-gradient(#b9b9b9 1px, transparent 1px) 0 0 / 3px 3px; clip-path: polygon(100% 0, 100% 100%, 0 100%); }
```
